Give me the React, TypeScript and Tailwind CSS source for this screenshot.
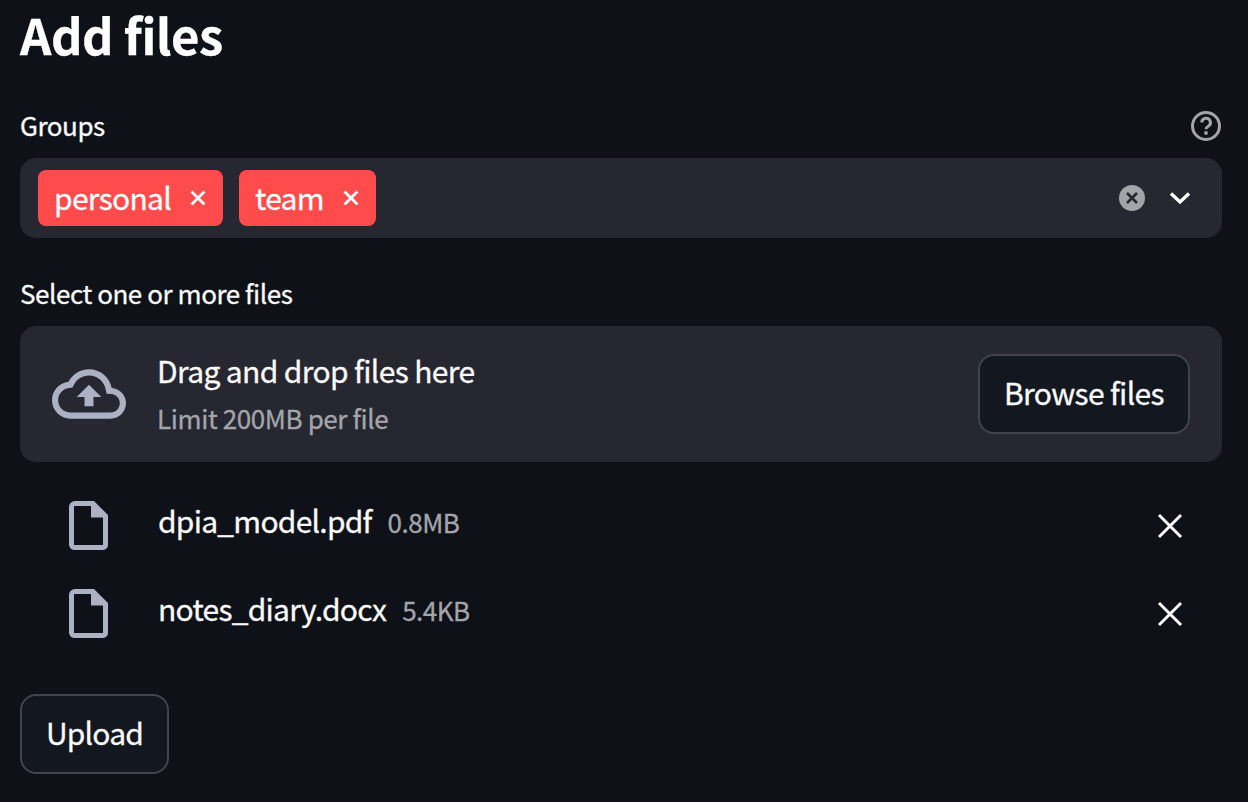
const font = { fontFamily: '"Noto Sans CJK SC", "Noto Sans", sans-serif' };

function FileIcon() {
  return (
    <svg width="40" height="50" viewBox="0 0 40 50" fill="#acb1c3" className="block">
      <path
        fillRule="evenodd"
        d="M6 0H25L39 14V44a5 5 0 0 1-5 5H6a6 6 0 0 1-6-5V6a6 6 0 0 1 6-6zM5 5V44H34V16.500H22V5z"
      />
    </svg>
  );
}

function CloseIcon() {
  return (
    <svg width="32" height="32" viewBox="0 0 32 32" stroke="#fafafa" strokeWidth="3" className="block">
      <path d="M5 5L27 27M27 5L5 27" />
    </svg>
  );
}

function TagX() {
  return (
    <svg width="16" height="16" viewBox="0 0 16 16" stroke="#fff" strokeWidth="2.8" className="block">
      <path d="M1.500 1.500L14.500 14.500M14.500 1.500L1.500 14.500" />
    </svg>
  );
}

function Tag({ label, width }: { label: string; width: string }) {
  return (
    <div className={`${width} h-14 flex items-center justify-between pl-4 pr-[17px] rounded-lg bg-[#ff4b4b] text-white text-[30px] tracking-[-0.7px]`}>
      <span className="-mt-[2px]">{label}</span>
      <TagX />
    </div>
  );
}

function FileRow({ name, size }: { name: string; size: string }) {
  return (
    <div className="h-[88px] flex items-center pl-[49px] pr-[36px]">
      <FileIcon />
      <div className="ml-[49px] flex items-baseline gap-4 flex-1 -mt-[11px]">
        <span className="text-[30px] tracking-[-0.75px] text-[#fafafa]">{name}</span>
        <span className="text-[26px] tracking-[-0.5px] text-[#a3a5ab]">{size}</span>
      </div>
      <CloseIcon />
    </div>
  );
}

export default function App() {
  return (
    <div style={font} className="w-[1248px] h-[802px] bg-[#0e1117] text-[#fafafa] pl-5 pr-[26px] [-webkit-text-stroke:0.3px]">
      <h1 className="h-[74px] text-[49px] leading-[68px] tracking-[-0.45px] font-bold text-white">Add files</h1>

      <div className="mt-[30px] h-[44px] flex items-center justify-between">
        <span className="text-[26px] tracking-[-0.45px] -mt-[3px]">Groups</span>
        <svg width="32" height="32" viewBox="0 0 32 32" fill="none" className="block">
          <circle cx="16" cy="16" r="13.500" stroke="#a3a5ab" strokeWidth="3" />
          <path d="M11.800 12.600a4.300 4.300 0 1 1 6.400 3.700c-1.400.8-2.200 1.500-2.200 3" stroke="#a3a5ab" strokeWidth="3" />
          <circle cx="16" cy="23" r="1.900" fill="#a3a5ab" />
        </svg>
      </div>

      <div className="mt-[10px] h-20 rounded-2xl bg-[#262730] flex items-center pl-[18px] pr-[30px]">
        <div className="flex gap-4">
          <Tag label="personal" width="w-[185px]" />
          <Tag label="team" width="w-[137px]" />
        </div>
        <div className="ml-auto flex items-center gap-[23px]">
          <svg width="26" height="26" viewBox="0 0 26 26" className="block">
            <circle cx="13" cy="13" r="13" fill="#a3a5ab" />
            <path d="M8 8L18 18M18 8L8 18" stroke="#262730" strokeWidth="2.600" />
          </svg>
          <svg width="24" height="24" viewBox="0 0 24 24" fill="none" className="block">
            <path d="M3 7.500L12 16L21 7.500" stroke="#fff" strokeWidth="3.400" />
          </svg>
        </div>
      </div>

      <div className="mt-8 h-[44px] flex items-center text-[26px] tracking-[-0.45px]">Select one or more files</div>

      <div className="mt-3 h-[136px] rounded-2xl bg-[#262730] flex items-center pl-8 pr-8">
        <svg width="74" height="74" viewBox="0 0 24 24" fill="#acb1c3" className="block shrink-0">
          <path d="M19.350 10.040C18.670 6.590 15.640 4 12 4 9.110 4 6.600 5.640 5.350 8.040 2.340 8.360 0 10.910 0 14c0 3.310 2.690 6 6 6h13c2.760 0 5-2.240 5-5 0-2.640-2.050-4.780-4.650-4.960zM19 18H6c-2.210 0-4-1.790-4-4 0-2.050 1.530-3.760 3.560-3.970l1.070-.11.5-.95C8.080 7.140 9.940 6 12 6c2.620 0 4.880 1.860 5.390 4.430l.3 1.500 1.530.11c1.560.1 2.780 1.410 2.780 2.960 0 1.650-1.350 3-3 3zM8 13h2.550v3h2.900v-3H16l-4-4z" />
        </svg>
        <div className="ml-[31px] flex flex-col">
          <span className="text-[30px] leading-[48px] tracking-[-0.63px]">Drag and drop files here</span>
          <span className="text-[26px] leading-[48px] tracking-[-0.4px] text-[#a3a5ab]">Limit 200MB per file</span>
        </div>
        <button className="ml-auto w-[212px] h-20 pb-1 rounded-2xl border-2 border-[#41444c] bg-[#131720] text-[30px] tracking-[-0.65px] text-[#fafafa]">Browse files</button>
      </div>

      <div className="mt-5">
        <FileRow name="dpia_model.pdf" size="0.8MB" />
        <FileRow name="notes_diary.docx" size="5.4KB" />
      </div>

      <button className="block mt-9 w-[149px] h-20 pb-1 rounded-2xl border-2 border-[#41444c] bg-[#131720] text-[30px] tracking-[-0.8px] text-[#fafafa]">Upload</button>
    </div>
  );
}
